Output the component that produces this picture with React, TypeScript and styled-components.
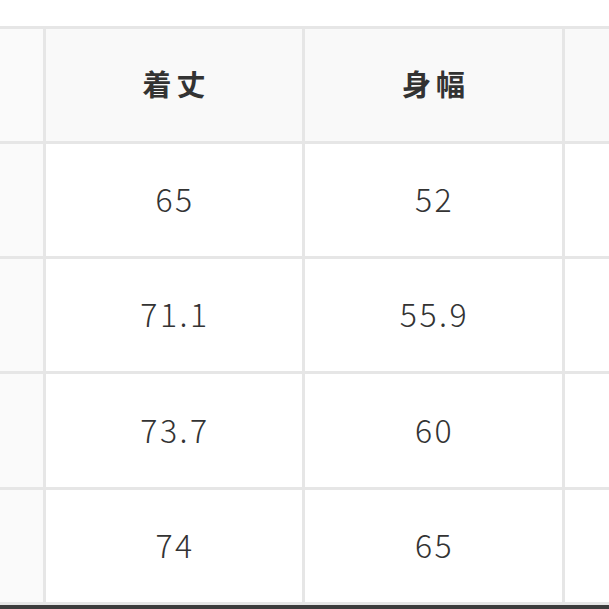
import { Fragment } from "react";
import styled, { createGlobalStyle } from "styled-components";

const GlobalStyle = createGlobalStyle`
  html, body {
    margin: 0;
    padding: 0;
    background: #ffffff;
  }
  body {
    font-family: "Noto Sans CJK JP", "Noto Sans", sans-serif;
    color: #333333;
  }
`;

const Page = styled.div`
  width: 609px;
  height: 609px;
  overflow: hidden;
  display: flex;
  flex-direction: column;
  background: #ffffff;
`;

const Spacer = styled.div`
  height: 26px;
  flex: none;
`;

const Table = styled.div`
  display: grid;
  grid-template-columns: 43px 256px 257px 1fr;
  grid-template-rows: 112px 112px 112px 113px 112px;
  gap: 3px;
  padding: 3px 0;
  background: #e6e6e6;
  flex: none;
`;

const Cell = styled.div<{ $kind?: "head" | "side" | "body" }>`
  display: flex;
  align-items: center;
  justify-content: center;
  background: ${(p) =>
    p.$kind === "head" ? "#f9f9f9" : p.$kind === "side" ? "#fafafa" : "#ffffff"};
  font-size: ${(p) => (p.$kind === "head" ? "29px" : "32px")};
  font-weight: ${(p) => (p.$kind === "head" ? 700 : 300)};
  letter-spacing: ${(p) => (p.$kind === "head" ? "5px" : "2.5px")};
  color: ${(p) => (p.$kind === "head" ? "#333333" : "#333333")};
  padding-left: ${(p) => (p.$kind === "head" ? "5px" : "2px")};
  padding-bottom: 4px;
`;

const BottomEdge = styled.div`
  flex: 1;
  background: #3c3c3c;
`;

const rows = [
  ["65", "52"],
  ["71.1", "55.9"],
  ["73.7", "60"],
  ["74", "65"],
];

export default function App() {
  return (
    <Page>
      <GlobalStyle />
      <Spacer />
      <Table>
        <Cell $kind="side" />
        <Cell $kind="head">着丈</Cell>
        <Cell $kind="head">身幅</Cell>
        <Cell $kind="head" />
        {rows.map((r, i) => (
          <Fragment key={i}>
            <Cell $kind="side" />
            <Cell>{r[0]}</Cell>
            <Cell>{r[1]}</Cell>
            <Cell />
          </Fragment>
        ))}
      </Table>
      <BottomEdge />
    </Page>
  );
}
